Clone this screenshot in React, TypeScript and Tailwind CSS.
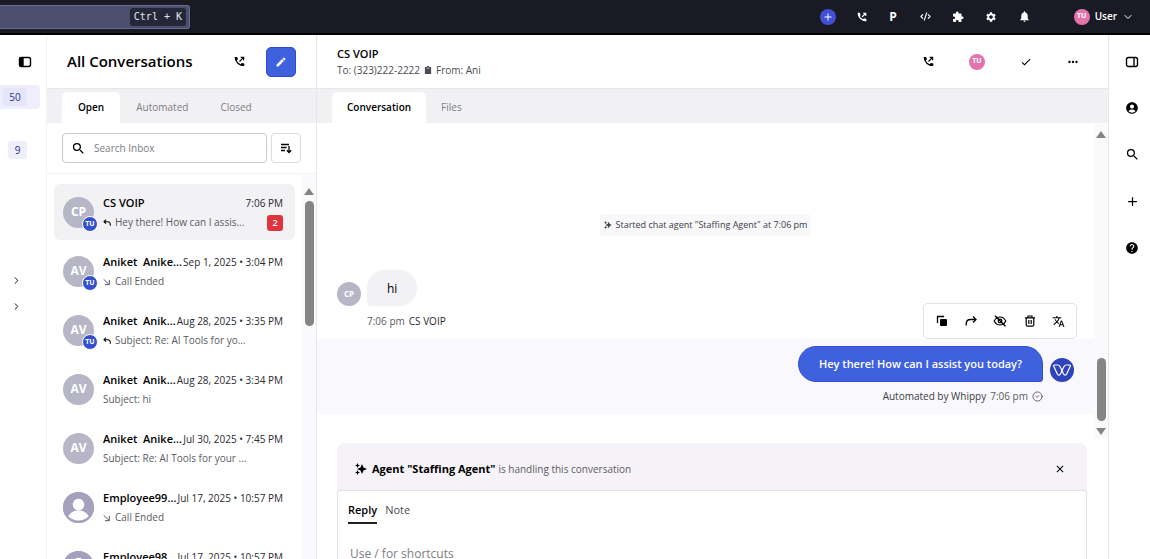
import type { ReactNode } from "react";
import {
  MdAccountCircle,
  MdAdd,
  MdCheck,
  MdClose,
  MdEdit,
  MdExtension,
  MdHelp,
  MdMoreHoriz,
  MdNotifications,
  MdSearch,
  MdSettings,
  MdTranslate,
} from "react-icons/md";
import { ChevronDown, ChevronRight, CircleCheck, CodeXml } from "lucide-react";

type Row = {
  name: string;
  initials?: string;
  time: string;
  preview: string;
  kind?: "reply" | "call";
  assigned?: boolean;
  unread?: number;
};

const rows: Row[] = [
  { name: "CS VOIP", initials: "CP", time: "7:06 PM", preview: "Hey there! How can I assis...", kind: "reply", assigned: true, unread: 2 },
  { name: "Aniket  Anike...", initials: "AV", time: "Sep 1, 2025 • 3:04 PM", preview: "Call Ended", kind: "call", assigned: true },
  { name: "Aniket  Anik...", initials: "AV", time: "Aug 28, 2025 • 3:35 PM", preview: "Subject: Re: AI Tools for yo...", kind: "reply", assigned: true },
  { name: "Aniket  Anik...", initials: "AV", time: "Aug 28, 2025 • 3:34 PM", preview: "Subject: hi" },
  { name: "Aniket  Anike...", initials: "AV", time: "Jul 30, 2025 • 7:45 PM", preview: "Subject: Re: AI Tools for your ..." },
  { name: "Employee99...", time: "Jul 17, 2025 • 10:57 PM", preview: "Call Ended", kind: "call" },
  { name: "Employee98...", time: "Jul 17, 2025 • 10:57 PM", preview: "Call Ended", kind: "call" },
];

function CallIcon({ className }: { className?: string }) {
  return (
    <svg viewBox="0 0 24 24" className={className} fill="none" stroke="currentColor" aria-hidden="true">
      <path d="M4 5C4 13 11 20.500 20 20.500" strokeWidth="3" />
      <path d="M1.500 2h5.500l1.500 5.500L5 10.500 2.500 9zM22.500 22v-5.500L17 15l-3 3.500 1.500 3z" fill="currentColor" stroke="none" />
      <path d="M12 12 21 3M14.500 3H21v6.500" strokeWidth="2.600" />
    </svg>
  );
}

function PanelIcon({ side }: { side: "left" | "right" }) {
  return (
    <svg viewBox="0 0 14 14" className="size-[14px]" fill="none" stroke="currentColor" strokeWidth="1.400" aria-hidden="true">
      <rect x="1.500" y="2.500" width="11" height="9" rx="2" />
      {side === "left" ? <path d="M2 3h3v8H2z" fill="currentColor" /> : <path d="M9 2.500v9" />}
    </svg>
  );
}

function SparkleIcon({ className }: { className?: string }) {
  return (
    <svg viewBox="0 0 24 24" className={className} fill="currentColor" aria-hidden="true">
      <path d="M14 2l3 7.200L24 12l-7 2.800L14 22l-3-7.200L4 12l7-2.800z" />
      <path d="M5 0l1.500 3.500L10 5 6.500 6.500 5 10 3.500 6.500 0 5l3.500-1.500zM5 14l1.500 3.500L10 19l-3.500 1.500L5 24l-1.500-3.500L0 19l3.500-1.500z" />
    </svg>
  );
}

function ReplyArrow() {
  return (
    <svg viewBox="0 0 12 12" className="size-2 text-black" fill="none" stroke="currentColor" strokeWidth="1.600" aria-hidden="true">
      <path d="M4.500 1 1.500 4l3 3M1.500 4H7c2.500 0 4 2 4 5v1" />
    </svg>
  );
}

function CallEndedArrow() {
  return (
    <svg viewBox="0 0 12 12" className="size-2" fill="none" stroke="currentColor" strokeWidth="1.500" aria-hidden="true">
      <path d="M1 2l8 7.500M9.500 3v7H3" />
    </svg>
  );
}

function ClipboardIcon() {
  return (
    <svg viewBox="0 0 9 10" className="w-2" fill="currentColor" aria-hidden="true">
      <path d="M1 1h2a1.500 1 0 0 1 3 0h2v9H1z" />
      <path d="M3 2.500h3" stroke="white" strokeWidth=".7" />
    </svg>
  );
}

function CopyIcon() {
  return (
    <svg viewBox="0 0 12 12" className="size-[12px]" aria-hidden="true">
      <path d="M1.500 8V1.500H8" fill="none" stroke="currentColor" strokeWidth="1.300" />
      <rect x="4" y="4" width="7" height="7" rx="1" fill="currentColor" />
    </svg>
  );
}

function ForwardIcon() {
  return (
    <svg viewBox="0 0 12 12" className="size-[12px]" fill="none" stroke="currentColor" strokeWidth="1.300" aria-hidden="true">
      <path d="M1.200 10.500V9c0-3 1.500-4.500 4.300-4.500H11M8 1.500l3 3-3 3" />
    </svg>
  );
}

function HideIcon() {
  return (
    <svg viewBox="0 0 14 12" className="w-[14px]" fill="none" stroke="currentColor" strokeWidth="1.200" aria-hidden="true">
      <path d="M1.200 6C2.500 3.500 4.500 2 7 2s4.500 1.500 5.800 4C11.500 8.500 9.500 10 7 10S2.500 8.500 1.200 6z" />
      <circle cx="7" cy="6" r="1.800" />
      <path d="M2 .8 12.500 11.300" strokeWidth="1.400" />
    </svg>
  );
}

function TrashIcon() {
  return (
    <svg viewBox="0 0 12 12" className="size-[12px]" fill="none" stroke="currentColor" strokeWidth="1.200" aria-hidden="true">
      <path d="M1 2.800h10M4 2.800V1h4v1.800M2.200 2.800v7.200q0 1.200 1.200 1.200h5.200q1.200 0 1.200-1.200V2.800M4.800 5v4M7.200 5v4" />
    </svg>
  );
}

function SortIcon() {
  return (
    <svg viewBox="0 0 12 12" className="size-[12px]" fill="none" stroke="currentColor" strokeWidth="1.300" aria-hidden="true">
      <path d="M1 2.500h8M1 5.500h5.500M1 8.500h4M9 4v6.500M6.800 8.300 9 10.500l2.200-2.200" />
    </svg>
  );
}

function WhippyLogo() {
  return (
    <span className="flex size-6 shrink-0 items-center justify-center rounded-full bg-[#2f43bd] text-white">
      <svg viewBox="0 0 18 12" className="w-[18px]" fill="none" stroke="currentColor" strokeWidth="1.200" strokeLinejoin="round" role="img" aria-label="Whippy">
        <path d="M1.200 1h3.300c1.300 0 2 .6 2.600 1.800L9 6.500l-1.400 3.200c-.9 1.800-2.500 1.800-3.400.1L.9 2.600C.4 1.700.6 1 1.200 1z" />
        <path d="M16.800 1h-3.300c-1.300 0-2 .6-2.600 1.800L9 6.500l1.400 3.200c.9 1.800 2.500 1.800 3.400.1l3.300-7.200c.5-.9.300-1.600-.3-1.600z" />
      </svg>
    </span>
  );
}

function ArrowHead({ down }: { down?: boolean }) {
  return (
    <svg viewBox="0 0 10 7" className="w-[10px] shrink-0 text-[#858585]" fill="currentColor" aria-hidden="true">
      {down ? <path d="M0 0h10L5 7z" /> : <path d="M5 0l5 7H0z" />}
    </svg>
  );
}

function IconButton({ label, className = "", children }: { label: string; className?: string; children: ReactNode }) {
  return (
    <button type="button" aria-label={label} className={`flex shrink-0 items-center justify-center ${className}`}>
      {children}
    </button>
  );
}

function TopBar() {
  return (
    <header className="flex h-[35px] shrink-0 items-center justify-between border-b-2 border-black bg-[#191a24] pr-4 text-white">
      <button
        type="button"
        aria-label="Search"
        className="flex h-6 w-[190px] items-center justify-end rounded-r-[3px] border border-l-0 border-[#686b91] bg-[#4c4e6d] pr-[3px]"
      >
        <kbd className="flex h-[18px] items-center rounded-[3px] bg-[#252738] px-1 font-['DejaVu_Sans_Mono',monospace] text-[10px] text-gray-200">
          Ctrl + K
        </kbd>
      </button>
      <div className="flex items-center">
        <IconButton label="New" className="mr-[21px] size-4 rounded-full bg-[#4350d3]">
          <MdAdd className="size-3" />
        </IconButton>
        <div className="mr-[43px] flex items-center gap-[21px]">
          <IconButton label="Calls"><CallIcon className="size-[10px]" /></IconButton>
          <IconButton label="Parking" className="w-[11px] text-xs font-bold">P</IconButton>
          <IconButton label="Developers"><CodeXml className="size-[11px]" strokeWidth={2.5} /></IconButton>
          <IconButton label="Integrations"><MdExtension className="size-3" /></IconButton>
          <IconButton label="Settings"><MdSettings className="size-3" /></IconButton>
          <IconButton label="Notifications"><MdNotifications className="size-[13px]" /></IconButton>
        </div>
        <button type="button" className="flex items-center gap-[5px] text-[10px] font-semibold">
          <span className="flex size-4 items-center justify-center rounded-full bg-[#e273ad] text-[7px] font-bold">TU</span>
          User
          <ChevronDown className="size-3" />
        </button>
      </div>
    </header>
  );
}

function LeftRail() {
  return (
    <nav aria-label="Inboxes" className="flex w-[47px] shrink-0 flex-col border-r border-gray-100 text-[10px] text-[#26308c]">
      <IconButton label="Toggle sidebar" className="mt-5 ml-[18px] size-[14px] text-black"><PanelIcon side="left" /></IconButton>
      <a href="#all" className="mt-4 mr-[6px] flex h-6 items-center rounded-r bg-[#efeffb] pl-[3px]">
        <span className="flex h-[18px] w-6 items-center justify-center rounded-[3px] bg-[#e6e6fb]">50</span>
      </a>
      <a href="#mine" className="mt-8 ml-2 flex h-[18px] w-[19px] items-center justify-center rounded-[3px] bg-[#efeffb]">9</a>
      <IconButton label="Expand teams" className="mt-[115px] ml-[10px] size-3 text-black"><ChevronRight className="size-[11px]" /></IconButton>
      <IconButton label="Expand labels" className="mt-[14px] ml-[10px] size-3 text-black"><ChevronRight className="size-[11px]" /></IconButton>
    </nav>
  );
}

function Avatar({ row }: { row: Row }) {
  return (
    <span className="relative flex size-[31px] shrink-0 items-center justify-center rounded-full bg-[#b7b6c6] text-xs font-bold text-white">
      {row.initials ?? (
        <svg viewBox="0 0 32 32" className="size-full rounded-full bg-[#a3a1be]" fill="currentColor" aria-hidden="true">
          <circle cx="16" cy="13" r="6" />
          <path d="M5.500 25c2-4 6-6 10.500-6s8.500 2 10.500 6c-6 6-15 6-21 0z" />
        </svg>
      )}
      {row.assigned && (
        <span className="absolute -right-1 -bottom-1 flex size-4 items-center justify-center rounded-full border border-white bg-[#3350cf] text-[7px]">
          TU
        </span>
      )}
    </span>
  );
}

function ConversationRow({ row }: { row: Row }) {
  return (
    <li className="pb-[3px]">
      <a href="#conversation" className={`flex h-14 items-center gap-[9px] rounded-md pr-3 pl-[9px] ${row.unread ? "bg-[#f2f1f4]" : ""}`}>
        <Avatar row={row} />
        <div className="min-w-0 flex-1 pt-[2px]">
          <div className="flex h-[19px] items-center justify-between whitespace-pre">
            <span className="text-[11px] font-semibold text-black">{row.name}</span>
            <span className="text-[10px] text-[#2a2a2e]">{row.time}</span>
          </div>
          <div className="flex h-[19px] items-center gap-1 text-[10px] text-[#5b5b63]">
            {row.kind === "reply" && <ReplyArrow />}
            {row.kind === "call" && <CallEndedArrow />}
            <span className="flex-1">{row.preview}</span>
            {row.unread && (
              <span className="flex size-4 items-center justify-center rounded-[3px] bg-[#e0353e] text-[9px] font-semibold text-white">{row.unread}</span>
            )}
          </div>
        </div>
      </a>
    </li>
  );
}

function Inbox() {
  return (
    <section className="flex w-[270px] shrink-0 flex-col border-r border-gray-200">
      <div className="flex h-[53px] shrink-0 items-center pr-5 pl-5">
        <h1 className="flex-1 text-[15px] font-semibold text-black">All Conversations</h1>
        <IconButton label="Call" className="mr-[21px] text-black"><CallIcon className="size-[11px]" /></IconButton>
        <IconButton label="New conversation" className="size-[30px] rounded-[5px] border border-[#2f4cc9] bg-[#3f61de] text-white">
          <MdEdit className="size-3" />
        </IconButton>
      </div>
      <div role="tablist" className="flex h-[35px] shrink-0 items-end border-t border-gray-200 bg-[#f1f1f4] pl-[15px] text-[10px] text-[#7d7d85]">
        <button type="button" role="tab" aria-selected="true" className="h-[31px] rounded-t-[5px] bg-white px-4 font-semibold text-black">Open</button>
        <button type="button" role="tab" aria-selected="false" className="h-[31px] px-4">Automated</button>
        <button type="button" role="tab" aria-selected="false" className="h-[31px] px-4">Closed</button>
      </div>
      <div className="flex h-[51px] shrink-0 items-center gap-1 border-b border-gray-100 pr-[15px] pl-[15px]">
        <label className="flex h-[30px] min-w-0 flex-1 items-center gap-2 rounded border border-[#c9c9ce] px-2">
          <MdSearch className="size-[15px] shrink-0 text-black" />
          <input type="search" aria-label="Search Inbox" placeholder="Search Inbox" className="min-w-0 flex-1 text-[10px] outline-none placeholder:text-[#7d7d85]" />
        </label>
        <IconButton label="Sort" className="size-[30px] rounded border border-[#dcdce0] text-black"><SortIcon /></IconButton>
      </div>
      <div className="flex min-h-0 flex-1">
        <ul className="min-w-0 flex-1 overflow-hidden pt-[10px] pr-[7px] pl-[7px]">
          {rows.map((row, i) => (
            <ConversationRow key={i} row={row} />
          ))}
        </ul>
        <div className="flex w-[14px] shrink-0 flex-col items-center bg-[#fafafc] pt-[14px]">
          <ArrowHead />
          <div className="mt-[6px] h-[125px] w-[9px] rounded-full bg-[#858585]" />
        </div>
      </div>
    </section>
  );
}

function ThreadHeader() {
  return (
    <>
      <div className="flex h-[53px] shrink-0 items-center pr-7 pl-5">
        <div className="flex-1 pt-px">
          <h2 className="text-[11px] leading-4 font-semibold text-black">CS VOIP</h2>
          <p className="flex items-center gap-1 text-[10px] leading-4 text-[#4b4b52]">
            To: (323)222-2222
            <ClipboardIcon />
            From: Ani
          </p>
        </div>
        <div className="flex items-center text-black">
          <IconButton label="Call"><CallIcon className="size-[11px]" /></IconButton>
          <span className="mx-[35px] flex size-4 items-center justify-center rounded-full bg-[#e273ad] text-[7px] font-bold text-white">TU</span>
          <IconButton label="Close conversation" className="mr-[34px]"><MdCheck className="size-3" /></IconButton>
          <IconButton label="More"><MdMoreHoriz className="size-[14px]" /></IconButton>
        </div>
      </div>
      <div role="tablist" className="flex h-[35px] shrink-0 items-end border-t border-gray-200 bg-[#f1f1f4] pl-[15px] text-[10px] text-[#7d7d85]">
        <button type="button" role="tab" aria-selected="true" className="h-[31px] rounded-t-[5px] bg-white px-[15px] font-semibold text-black">Conversation</button>
        <button type="button" role="tab" aria-selected="false" className="h-[31px] px-[15px]">Files</button>
      </div>
    </>
  );
}

function Messages() {
  return (
    <div className="flex h-[315px] shrink-0">
      <div className="flex min-w-0 flex-1 flex-col pt-[91px]">
        <p className="flex h-[22px] items-center gap-1 self-center rounded-sm bg-[#f8f8fa] px-1 text-[9px] font-medium text-[#3c3c43]">
          <SparkleIcon className="size-2" />
          Started chat agent "Staffing Agent" at 7:06 pm
        </p>
        <div className="mt-[34px] flex items-end gap-[6px] pl-5">
          <span className="flex size-6 items-center justify-center rounded-full bg-[#b7b6c6] text-[8px] font-bold text-white">CP</span>
          <p className="flex h-9 items-center rounded-[18px] rounded-bl-sm bg-[#f2f1f4] px-5 pt-[2px] text-xs text-black">hi</p>
        </div>
        <p className="mt-[7px] flex h-4 items-center gap-1 pl-[50px] text-[10px] text-[#5b5b63]">
          7:06 pm <span className="font-medium text-[#2a2a2e]">CS VOIP</span>
        </p>
        <div className="relative mt-[10px] h-[75px] bg-[#f9f9fd] pt-[7px] pr-5">
          <div className="absolute right-[17px] bottom-full flex h-9 items-center gap-4 rounded-[5px] border border-[#e2e2e6] bg-white px-[11px] text-black">
            <IconButton label="Copy" className="w-[13px]"><CopyIcon /></IconButton>
            <IconButton label="Forward" className="w-[13px]"><ForwardIcon /></IconButton>
            <IconButton label="Hide" className="w-[14px]"><HideIcon /></IconButton>
            <IconButton label="Delete" className="w-[13px]"><TrashIcon /></IconButton>
            <IconButton label="Translate" className="w-[13px]"><MdTranslate className="size-[13px]" /></IconButton>
          </div>
          <div className="flex items-end justify-end gap-[7px]">
            <p className="flex h-9 items-center rounded-[18px] rounded-br-[3px] border border-[#3350cf] bg-[#3f61de] px-5 text-[11px] font-semibold text-white">
              Hey there! How can I assist you today?
            </p>
            <WhippyLogo />
          </div>
          <p className="mt-[6px] mr-[31px] flex h-4 items-center justify-end gap-1 text-[10px] text-[#5b5b63]">
            <span className="font-medium text-[#3c3c43]">Automated by Whippy</span> 7:06 pm
            <CircleCheck className="size-[11px]" />
          </p>
        </div>
      </div>
      <div className="flex w-[14px] shrink-0 flex-col items-center bg-[#fafafc] pt-2 pb-[3px]">
        <ArrowHead />
        <div className="mt-auto mb-[7px] h-[63px] w-[9px] rounded-full bg-[#858585]" />
        <ArrowHead down />
      </div>
    </div>
  );
}

function Composer() {
  return (
    <div className="mr-[21px] ml-5 flex min-h-0 flex-1 flex-col pt-[5px]">
      <div className="flex h-[51px] shrink-0 items-center rounded-t-lg bg-[#f5f3f7] px-[18px] pt-px text-black">
        <SparkleIcon className="mr-[5px] size-3" />
        <p className="flex-1 text-[11px] font-bold">
          Agent "Staffing Agent" <span className="text-[10px] font-normal text-[#5b5b63]">is handling this conversation</span>
        </p>
        <IconButton label="Dismiss" className="mr-[3px]"><MdClose className="size-3" /></IconButton>
      </div>
      <div className="-mt-1 min-h-[90px] flex-1 rounded-t border border-b-0 border-[#e2e2e6] bg-white px-[10px] pt-2">
        <div role="tablist" className="flex gap-2 text-[11px] text-[#4b4b52]">
          <button type="button" role="tab" aria-selected="true" className="h-[25px] border-b-2 border-[#222] font-semibold text-black">Reply</button>
          <button type="button" role="tab" aria-selected="false" className="h-[25px] border-b-2 border-transparent">Note</button>
        </div>
        <textarea
          aria-label="Message"
          placeholder="Use / for shortcuts"
          className="mt-[22px] block w-full resize-none pl-[2px] text-xs outline-none placeholder:text-[#7d7d85]"
        />
      </div>
    </div>
  );
}

function RightRail() {
  return (
    <aside className="flex w-[42px] shrink-0 flex-col items-center gap-8 border-l border-gray-200 pt-5 pl-[5px] text-black">
      <IconButton label="Toggle details"><PanelIcon side="right" /></IconButton>
      <IconButton label="Contact"><MdAccountCircle className="size-[14px]" /></IconButton>
      <IconButton label="Search conversation"><MdSearch className="size-[15px]" /></IconButton>
      <IconButton label="Add"><MdAdd className="size-[15px]" /></IconButton>
      <IconButton label="Help"><MdHelp className="size-[14px]" /></IconButton>
    </aside>
  );
}

export default function App() {
  return (
    <div className="flex h-screen flex-col overflow-hidden bg-white font-['Open_Sans','Noto_Sans',sans-serif]">
      <TopBar />
      <div className="flex min-h-0 flex-1">
        <LeftRail />
        <Inbox />
        <main className="flex min-w-0 flex-1 flex-col">
          <ThreadHeader />
          <Messages />
          <Composer />
        </main>
        <RightRail />
      </div>
    </div>
  );
}
